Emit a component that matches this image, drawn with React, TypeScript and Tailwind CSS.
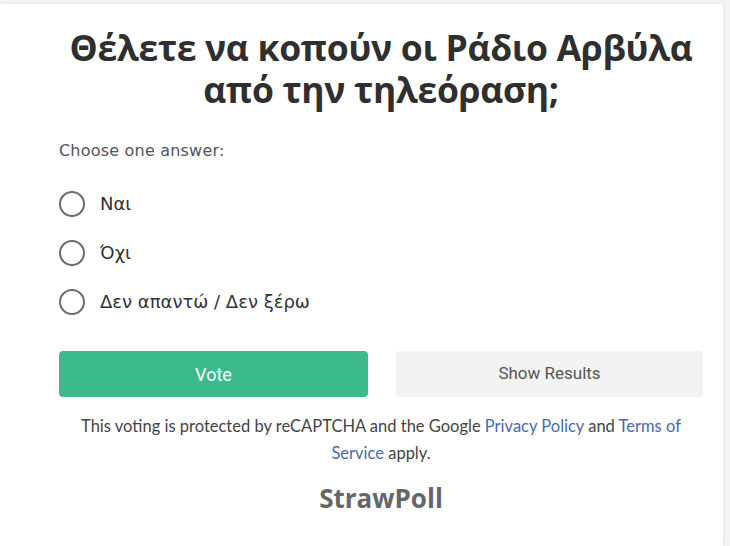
import React, { useState } from 'react';

const options = ['Ναι', 'Όχι', 'Δεν απαντώ / Δεν ξέρω'];

export default function App() {
  const [selected, setSelected] = useState<number | null>(null);

  return (
    <div className="min-h-[546px] w-[730px] bg-[#f4f4f4] pt-[4px] overflow-hidden">
      <div className="w-[723px] h-[542px] bg-white shadow-[1px_0_4px_rgba(0,0,0,0.06)] pl-[59px] pr-[20px] pt-[22px]">
        <h1 className="text-center text-[35.5px] leading-[42px] font-bold text-[#2f2f2f] font-['Open_Sans',sans-serif] tracking-[-0.3px]">
          Θέλετε να κοπούν οι Ράδιο Αρβύλα
          <br />
          από την τηλεόραση;
        </h1>

        <p className="mt-[29px] text-[16px] text-[#555] font-['DejaVu_Sans',sans-serif] tracking-[0.2px]">
          Choose one answer:
        </p>

        <div className="mt-[27px] flex flex-col gap-[22px]">
          {options.map((opt, i) => (
            <label
              key={opt}
              className="flex items-center gap-[15px] cursor-pointer h-[27px]"
              onClick={() => setSelected(i)}
            >
              <span className="w-[26px] h-[26px] rounded-full border-2 border-[#6b6b6b] flex items-center justify-center">
                {selected === i && <span className="w-[12px] h-[12px] rounded-full bg-[#3dba8c]" />}
              </span>
              <span className="text-[18px] text-[#333] font-['DejaVu_Sans',sans-serif]">{opt}</span>
            </label>
          ))}
        </div>

        <div className="mt-[36px] flex gap-[28px]">
          <button className="w-[309px] h-[46px] rounded-[4px] bg-[#3dba8c] text-white text-[18px] font-['Roboto',sans-serif]">
            Vote
          </button>
          <button className="w-[307px] h-[46px] rounded-[4px] bg-[#f3f3f3] text-[#555] text-[17px] font-['Roboto',sans-serif]">
            Show Results
          </button>
        </div>

        <div className="mt-[16px] text-center text-[16.5px] leading-[27px] text-[#444] font-['Lato',sans-serif]">
          <div>
            This voting is protected by reCAPTCHA and the Google{' '}
            <a className="text-[#4a68b0]">Privacy Policy</a> and{' '}
            <a className="text-[#4a68b0]">Terms of</a>
          </div>
          <div>
            <a className="text-[#4a68b0]">Service</a> apply.
          </div>
        </div>

        <div className="mt-[12px] text-center text-[26px] font-bold text-[#666] font-['Open_Sans',sans-serif]">
          StrawPoll
        </div>
      </div>
    </div>
  );
}
